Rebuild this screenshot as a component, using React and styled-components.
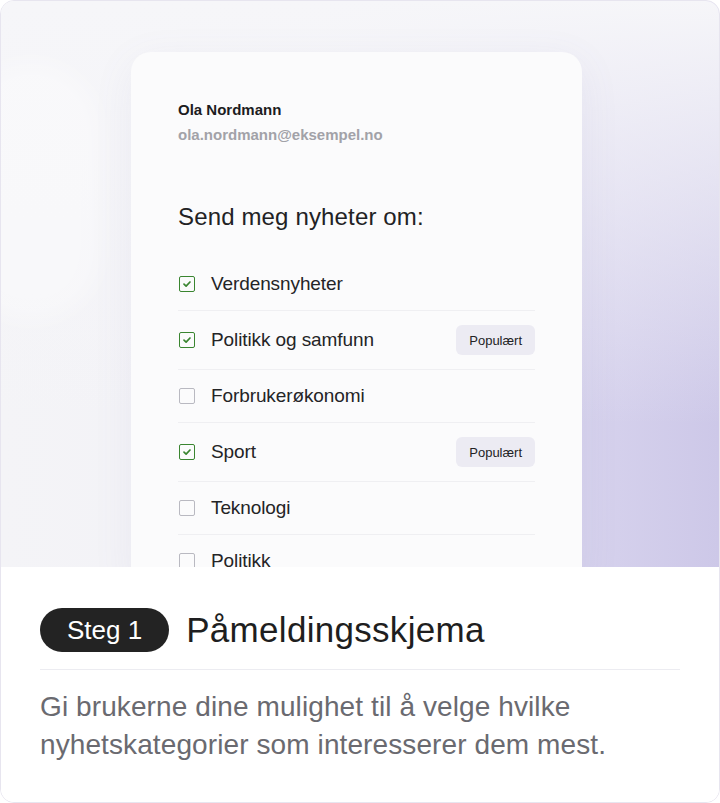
import React from 'react'
import styled, { createGlobalStyle } from 'styled-components'

const GlobalStyle = createGlobalStyle`
  html, body {
    margin: 0;
    padding: 0;
    background: #fff;
  }
  body {
    font-family: "Liberation Sans", Arial, Helvetica, sans-serif;
    -webkit-font-smoothing: antialiased;
  }
`

const topics = [
  { name: 'Verdensnyheter', checked: true },
  { name: 'Politikk og samfunn', checked: true, popular: true },
  { name: 'Forbrukerøkonomi', checked: false },
  { name: 'Sport', checked: true, popular: true },
  { name: 'Teknologi', checked: false },
  { name: 'Politikk', checked: false }
]

const CheckIcon = () => (
  <svg width="10" height="10" viewBox="0 0 10 10" fill="none">
    <path d="M2 5.2 L4.1 7.2 L8 3" stroke="#3a8530" strokeWidth="1.7" strokeLinecap="round" strokeLinejoin="round" />
  </svg>
)

class App extends React.Component {
  render () {
    return (
      <>
        <GlobalStyle />
        <Frame>
          <Stage>
            <Blob />
            <FormCard>
              <Name>Ola Nordmann</Name>
              <Email>ola.nordmann@eksempel.no</Email>
              <Heading>Send meg nyheter om:</Heading>
              <List>
                {topics.map(t => (
                  <Row key={t.name} $popular={t.popular}>
                    <Box $checked={t.checked}>
                      {t.checked && <CheckIcon />}
                    </Box>
                    <Label>{t.name}</Label>
                    {t.popular && <Badge>Populært</Badge>}
                  </Row>
                ))}
              </List>
            </FormCard>
          </Stage>
          <Footer>
            <TitleRow>
              <Step>Steg 1</Step>
              <Title>Påmeldingsskjema</Title>
            </TitleRow>
            <Divider />
            <Text>
              Gi brukerne dine mulighet til å velge hvilke nyhetskategorier som interesserer dem mest.
            </Text>
          </Footer>
        </Frame>
      </>
    )
  }
}

export default App

const Frame = styled.div`
  width: 720px;
  height: 803px;
  box-sizing: border-box;
  border: 1px solid #e7e5ef;
  border-radius: 14px;
  overflow: hidden;
  display: flex;
  flex-direction: column;
  background: #fff;
`

const Stage = styled.div`
  position: relative;
  height: 566px;
  flex-shrink: 0;
  overflow: hidden;
  display: flex;
  justify-content: center;
  padding-top: 51px;
  box-sizing: border-box;
  background:
    linear-gradient(180deg, rgba(246, 246, 249, 1) 0%, rgba(246, 246, 249, 0.55) 35%, rgba(246, 246, 249, 0) 75%),
    linear-gradient(90deg, #f4f4f7 0%, #f2f1f7 45%, #d8d4ee 78%, #cdc8e8 100%);
`

const Blob = styled.div`
  position: absolute;
  left: -40px;
  top: 60px;
  width: 140px;
  height: 260px;
  border-radius: 70px;
  background: rgba(255, 255, 255, 0.35);
  filter: blur(12px);
`

const FormCard = styled.div`
  position: relative;
  width: 451px;
  flex-shrink: 0;
  align-self: flex-start;
  margin-left: -7px;
  background: #fbfbfc;
  border-radius: 20px;
  padding: 48px 47px 0 47px;
  box-sizing: border-box;
  box-shadow: 0 10px 40px rgba(120, 112, 170, 0.08);
`

const Name = styled.div`
  font-size: 15px;
  font-weight: 700;
  color: #1c1c1e;
  line-height: 20px;
`

const Email = styled.div`
  margin-top: 5px;
  font-size: 15px;
  font-weight: 700;
  color: #a2a2a8;
  line-height: 20px;
`

const Heading = styled.div`
  margin-top: 57px;
  font-size: 24px;
  font-weight: 400;
  color: #222224;
  line-height: 30px;
  letter-spacing: 0.15px;
`

const List = styled.div`
  margin-top: 26px;
  display: flex;
  flex-direction: column;
`

const Row = styled.div`
  display: flex;
  align-items: center;
  min-height: ${props => props.$popular ? '30px' : '24px'};
  padding: ${props => props.$popular ? '14px 0' : '14px 0'};
  border-bottom: 1px solid #efeff2;
`

const Box = styled.div`
  width: 16px;
  height: 16px;
  box-sizing: border-box;
  border-radius: 2px;
  border: 1.7px solid ${props => props.$checked ? '#3a8530' : '#b9b9c1'};
  display: flex;
  align-items: center;
  justify-content: center;
  flex-shrink: 0;
  margin-left: 1px;
`

const Label = styled.div`
  margin-left: 16px;
  flex: 1;
  font-size: 19px;
  color: #242426;
  letter-spacing: -0.1px;
  line-height: 24px;
`

const Badge = styled.div`
  height: 30px;
  padding: 0 13px;
  display: flex;
  align-items: center;
  border-radius: 6px;
  background: #ecebf3;
  font-size: 13px;
  color: #232325;
`

const Footer = styled.div`
  flex: 1;
  background: #fff;
  padding: 41px 39px 0 39px;
`

const TitleRow = styled.div`
  display: flex;
  align-items: center;
  gap: 17px;
`

const Step = styled.div`
  height: 44px;
  padding: 0 27px;
  display: flex;
  align-items: center;
  border-radius: 22px;
  background: #232323;
  color: #fff;
  font-size: 26px;
`

const Title = styled.div`
  font-size: 35px;
  color: #1e1e20;
  letter-spacing: 0.3px;
`

const Divider = styled.div`
  margin-top: 17px;
  height: 1px;
  background: #ececf1;
`

const Text = styled.p`
  margin: 18px 0 0 0;
  font-size: 28px;
  line-height: 38px;
  color: #6a6a70;
  letter-spacing: 0.1px;
  max-width: 620px;
`
